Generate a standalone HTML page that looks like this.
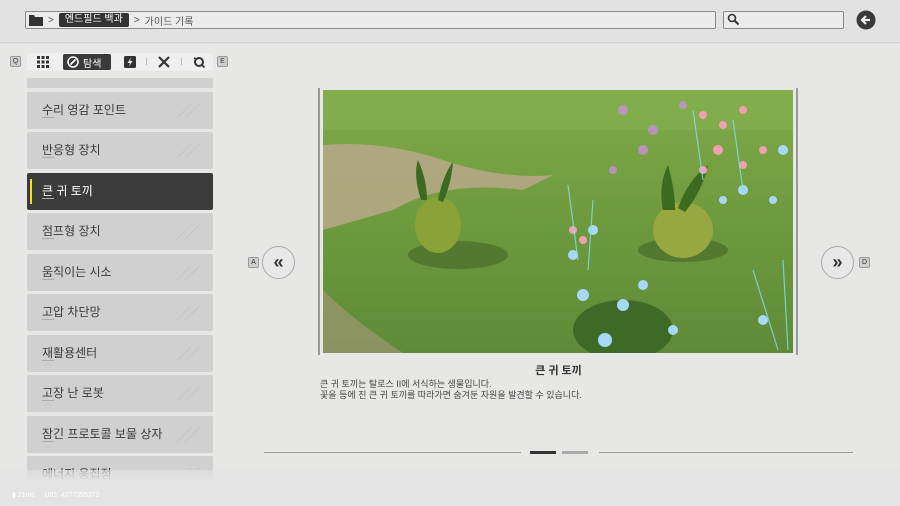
<!DOCTYPE html>
<html><head><meta charset="utf-8"><style>
*{margin:0;padding:0;box-sizing:border-box}
body{width:900px;height:506px;overflow:hidden;background:#e7e7e6;font-family:"Liberation Sans","Noto Sans CJK KR",sans-serif;position:relative;color:#333}
.abs{position:absolute}
.topbg{left:0;top:0;width:900px;height:44px;background:#e2e2e2}
.bar{left:25px;top:11px;width:691px;height:18px;background:#ececec;border:1px solid #8a8a8a;border-radius:2px}
.srch{left:723px;top:11px;width:121px;height:18px;background:#ececec;border:1px solid #8a8a8a;border-radius:2px}
.item{left:27px;width:186px;height:37px;background:#d0d0d0;border-radius:2px;font-size:12px;color:#3a3a3a;padding-left:15px;line-height:37px}
.item.sel{background:#3b3b3b;color:#fff}
.item .sub{position:absolute;left:15px;top:25px;width:12px;height:1px;background:#aaa}
.item .dec{position:absolute;right:12px;top:12px;width:28px;height:14px;opacity:.18;background:linear-gradient(135deg,transparent 40%,#888 42%,transparent 46%,transparent 60%,#888 62%,transparent 66%)}
.key{width:11px;height:11px;background:#cfcfcf;border:1px solid #999;border-radius:2px;font-size:7px;line-height:9px;text-align:center;color:#333}
.circ{width:33px;height:33px;border-radius:50%;border:1px solid #aaa;background:#e8e8e8;text-align:center;line-height:30px;font-size:18px;color:#333;font-weight:bold}
.crumb{left:29px;top:11px;height:18px;display:flex;align-items:center;gap:5px;font-size:10px;color:#555}
</style></head><body>
<div class="abs topbg"></div>
<div class="abs" style="left:0;top:42px;width:900px;height:1px;background:#cfcfcf"></div>
<div class="abs bar"></div>
<div class="abs crumb">
<svg width="14" height="12"><path d="M0 1h5l1 2h8v9H0z" fill="#333"/></svg>
<span>&gt;</span>
<span style="background:#333;color:#fff;border-radius:2px;padding:0 6px;height:14px;line-height:14px">엔드필드 백과</span>
<span>&gt;</span><span>가이드 기록</span>
</div>
<div class="abs srch"></div>
<svg class="abs" style="left:727px;top:13px" width="14" height="14"><circle cx="5" cy="5" r="3.5" stroke="#333" stroke-width="1.6" fill="none"/><path d="M7.5 7.5l4 4" stroke="#333" stroke-width="2"/></svg>
<svg class="abs" style="left:856px;top:10px" width="20" height="20"><circle cx="10" cy="10" r="9.5" fill="#3a3a3a"/><path d="M14 10H7M10 6l-4 4 4 4" stroke="#eee" stroke-width="2.2" fill="none"/></svg>

<div class="abs key" style="left:10px;top:56px">Q</div>
<div class="abs" style="left:27px;top:53px;width:186px;height:18px;background:#efefef;border-radius:2px"></div>
<svg class="abs" style="left:37px;top:56px" width="12" height="12"><g fill="#333"><rect x="0" y="0" width="3" height="3"/><rect x="4.5" y="0" width="3" height="3"/><rect x="9" y="0" width="3" height="3"/><rect x="0" y="4.5" width="3" height="3"/><rect x="4.5" y="4.5" width="3" height="3"/><rect x="9" y="4.5" width="3" height="3"/><rect x="0" y="9" width="3" height="3"/><rect x="4.5" y="9" width="3" height="3"/><rect x="9" y="9" width="3" height="3"/></g></svg>
<div class="abs" style="left:63px;top:54px;width:48px;height:16px;background:#3a3a3a;border-radius:2px"></div>
<svg class="abs" style="left:67px;top:56px" width="12" height="12"><circle cx="6" cy="6" r="5" stroke="#fff" stroke-width="1.6" fill="none"/><path d="M3.5 8.5L8.5 3.5" stroke="#fff" stroke-width="1.8"/></svg>
<div class="abs" style="left:83px;top:55px;font-size:10px;color:#fff">탐색</div>
<svg class="abs" style="left:124px;top:56px" width="12" height="12"><rect width="12" height="12" rx="1.5" fill="#333"/><path d="M7 1.5L3.5 7H6l-1 3.5L8.5 5H6z" fill="#eee"/></svg>
<div class="abs" style="left:146px;top:58px;width:1px;height:7px;background:#bbb"></div>
<svg class="abs" style="left:158px;top:56px" width="12" height="12"><path d="M1 1l10 10M11 1L1 11" stroke="#333" stroke-width="2.2"/></svg>
<div class="abs" style="left:181px;top:58px;width:1px;height:7px;background:#bbb"></div>
<svg class="abs" style="left:193px;top:56px" width="12" height="12"><circle cx="6" cy="6" r="4" stroke="#333" stroke-width="2" fill="none"/><path d="M9 9l2.5 2.5M1 2l2 1" stroke="#333" stroke-width="1.8"/></svg>
<div class="abs key" style="left:217px;top:56px">E</div>

<div class="abs item" style="top:78px;height:10px"></div>
<div class="abs item" style="top:92px">수리 영감 포인트<i class="sub"></i><i class="dec"></i></div>
<div class="abs item" style="top:132px">반응형 장치<i class="sub"></i><i class="dec"></i></div>
<div class="abs item sel" style="top:173px">큰 귀 토끼<i class="sub"></i><div style="position:absolute;left:3px;top:6px;width:2px;height:25px;background:#f0e020"></div></div>
<div class="abs item" style="top:213px">점프형 장치<i class="sub"></i><i class="dec"></i></div>
<div class="abs item" style="top:254px">움직이는 시소<i class="sub"></i><i class="dec"></i></div>
<div class="abs item" style="top:294px">고압 차단망<i class="sub"></i><i class="dec"></i></div>
<div class="abs item" style="top:335px">재활용센터<i class="sub"></i><i class="dec"></i></div>
<div class="abs item" style="top:375px">고장 난 로봇<i class="sub"></i><i class="dec"></i></div>
<div class="abs item" style="top:416px">잠긴 프로토콜 보물 상자<i class="sub"></i><i class="dec"></i></div>
<div class="abs item" style="top:456px">에너지 응집점<i class="sub"></i><i class="dec"></i></div>
<div class="abs" style="left:0;top:470px;width:900px;height:36px;background:linear-gradient(rgba(228,228,228,0.6),#e4e4e4 30%)"></div>
<div class="abs" style="left:12px;top:491px;font-size:7px;color:#fff">▮ 21ms &nbsp;&nbsp;&nbsp; UID: 4277355372</div>

<div class="abs" style="left:318px;top:88px;width:2px;height:267px;background:#999"></div>
<div class="abs" style="left:796px;top:88px;width:2px;height:267px;background:#999"></div>
<svg class="abs" style="left:323px;top:90px" width="470" height="263">
<defs><linearGradient id="g" x1="0" y1="0" x2="0" y2="1"><stop offset="0" stop-color="#7faa4a"/><stop offset=".5" stop-color="#6e9a3e"/><stop offset="1" stop-color="#5f8a38"/></linearGradient></defs>
<rect width="470" height="263" fill="url(#g)"/>
<path d="M0 55Q60 50 120 70T230 85L200 100Q120 90 70 120L0 140z" fill="#b8a88a" opacity=".85"/>
<path d="M0 200Q30 230 80 263H0z" fill="#a89a7c" opacity=".6"/>
<rect x="0" y="0" width="470" height="40" fill="#86b050" opacity=".6"/>
<ellipse cx="135" cy="165" rx="50" ry="14" fill="#3c5a24" opacity=".5"/>
<ellipse cx="115" cy="135" rx="23" ry="28" fill="#8aa238"/>
<path d="M98 110Q90 85 95 70Q104 90 104 110zM115 110Q120 85 130 72Q128 95 120 112z" fill="#3c6a20"/>
<ellipse cx="360" cy="160" rx="45" ry="12" fill="#3c5a24" opacity=".5"/>
<ellipse cx="360" cy="140" rx="30" ry="28" fill="#98a840"/>
<path d="M340 120Q335 95 345 75Q352 100 352 120zM355 118Q365 90 385 75Q380 100 362 122z" fill="#3c6a20"/>
<ellipse cx="300" cy="240" rx="50" ry="30" fill="#3e6a28"/>
<g fill="#c890d8" opacity=".8"><circle cx="300" cy="20" r="5"/><circle cx="330" cy="40" r="5"/><circle cx="360" cy="15" r="4"/><circle cx="290" cy="80" r="4"/><circle cx="320" cy="60" r="5"/></g>
<g fill="#f0a0b0"><circle cx="380" cy="25" r="4"/><circle cx="400" cy="35" r="4"/><circle cx="420" cy="20" r="4"/><circle cx="395" cy="60" r="5"/><circle cx="420" cy="75" r="4"/><circle cx="440" cy="60" r="4"/><circle cx="380" cy="80" r="4"/><circle cx="250" cy="140" r="4"/><circle cx="260" cy="150" r="4"/></g>
<g fill="#a8d8f8"><circle cx="420" cy="100" r="5"/><circle cx="450" cy="110" r="4"/><circle cx="400" cy="110" r="4"/><circle cx="260" cy="205" r="6"/><circle cx="300" cy="215" r="6"/><circle cx="282" cy="250" r="7"/><circle cx="250" cy="165" r="5"/><circle cx="270" cy="140" r="5"/><circle cx="350" cy="240" r="5"/><circle cx="440" cy="230" r="5"/><circle cx="460" cy="60" r="5"/><circle cx="320" cy="195" r="5"/></g>
<g stroke="#80e0f0" stroke-width="1.2" opacity=".8"><path d="M245 95L255 170M270 110L265 180M430 180L455 260M460 170L465 260M370 20L380 90M410 30L420 100"/></g>
</svg>

<div class="abs key" style="left:248px;top:257px">A</div>
<div class="abs circ" style="left:262px;top:246px">«</div>
<div class="abs circ" style="left:821px;top:246px">»</div>
<div class="abs key" style="left:859px;top:257px">D</div>

<div class="abs" style="left:0;top:362px;width:1117px;text-align:center;font-size:11px;font-weight:bold;color:#333">큰 귀 토끼</div>
<div class="abs" style="left:320px;top:379px;font-size:9px;line-height:11px;color:#444">큰 귀 토끼는 탈로스 II에 서식하는 생물입니다.<br>꽃을 등에 진 큰 귀 토끼를 따라가면 숨겨둔 자원을 발견할 수 있습니다.</div>

<div class="abs" style="left:264px;top:452px;width:257px;height:1px;background:#999"></div>
<div class="abs" style="left:530px;top:451px;width:26px;height:3px;background:#333"></div>
<div class="abs" style="left:562px;top:451px;width:26px;height:3px;background:#aaa"></div>
<div class="abs" style="left:599px;top:452px;width:254px;height:1px;background:#999"></div>
</body></html>
